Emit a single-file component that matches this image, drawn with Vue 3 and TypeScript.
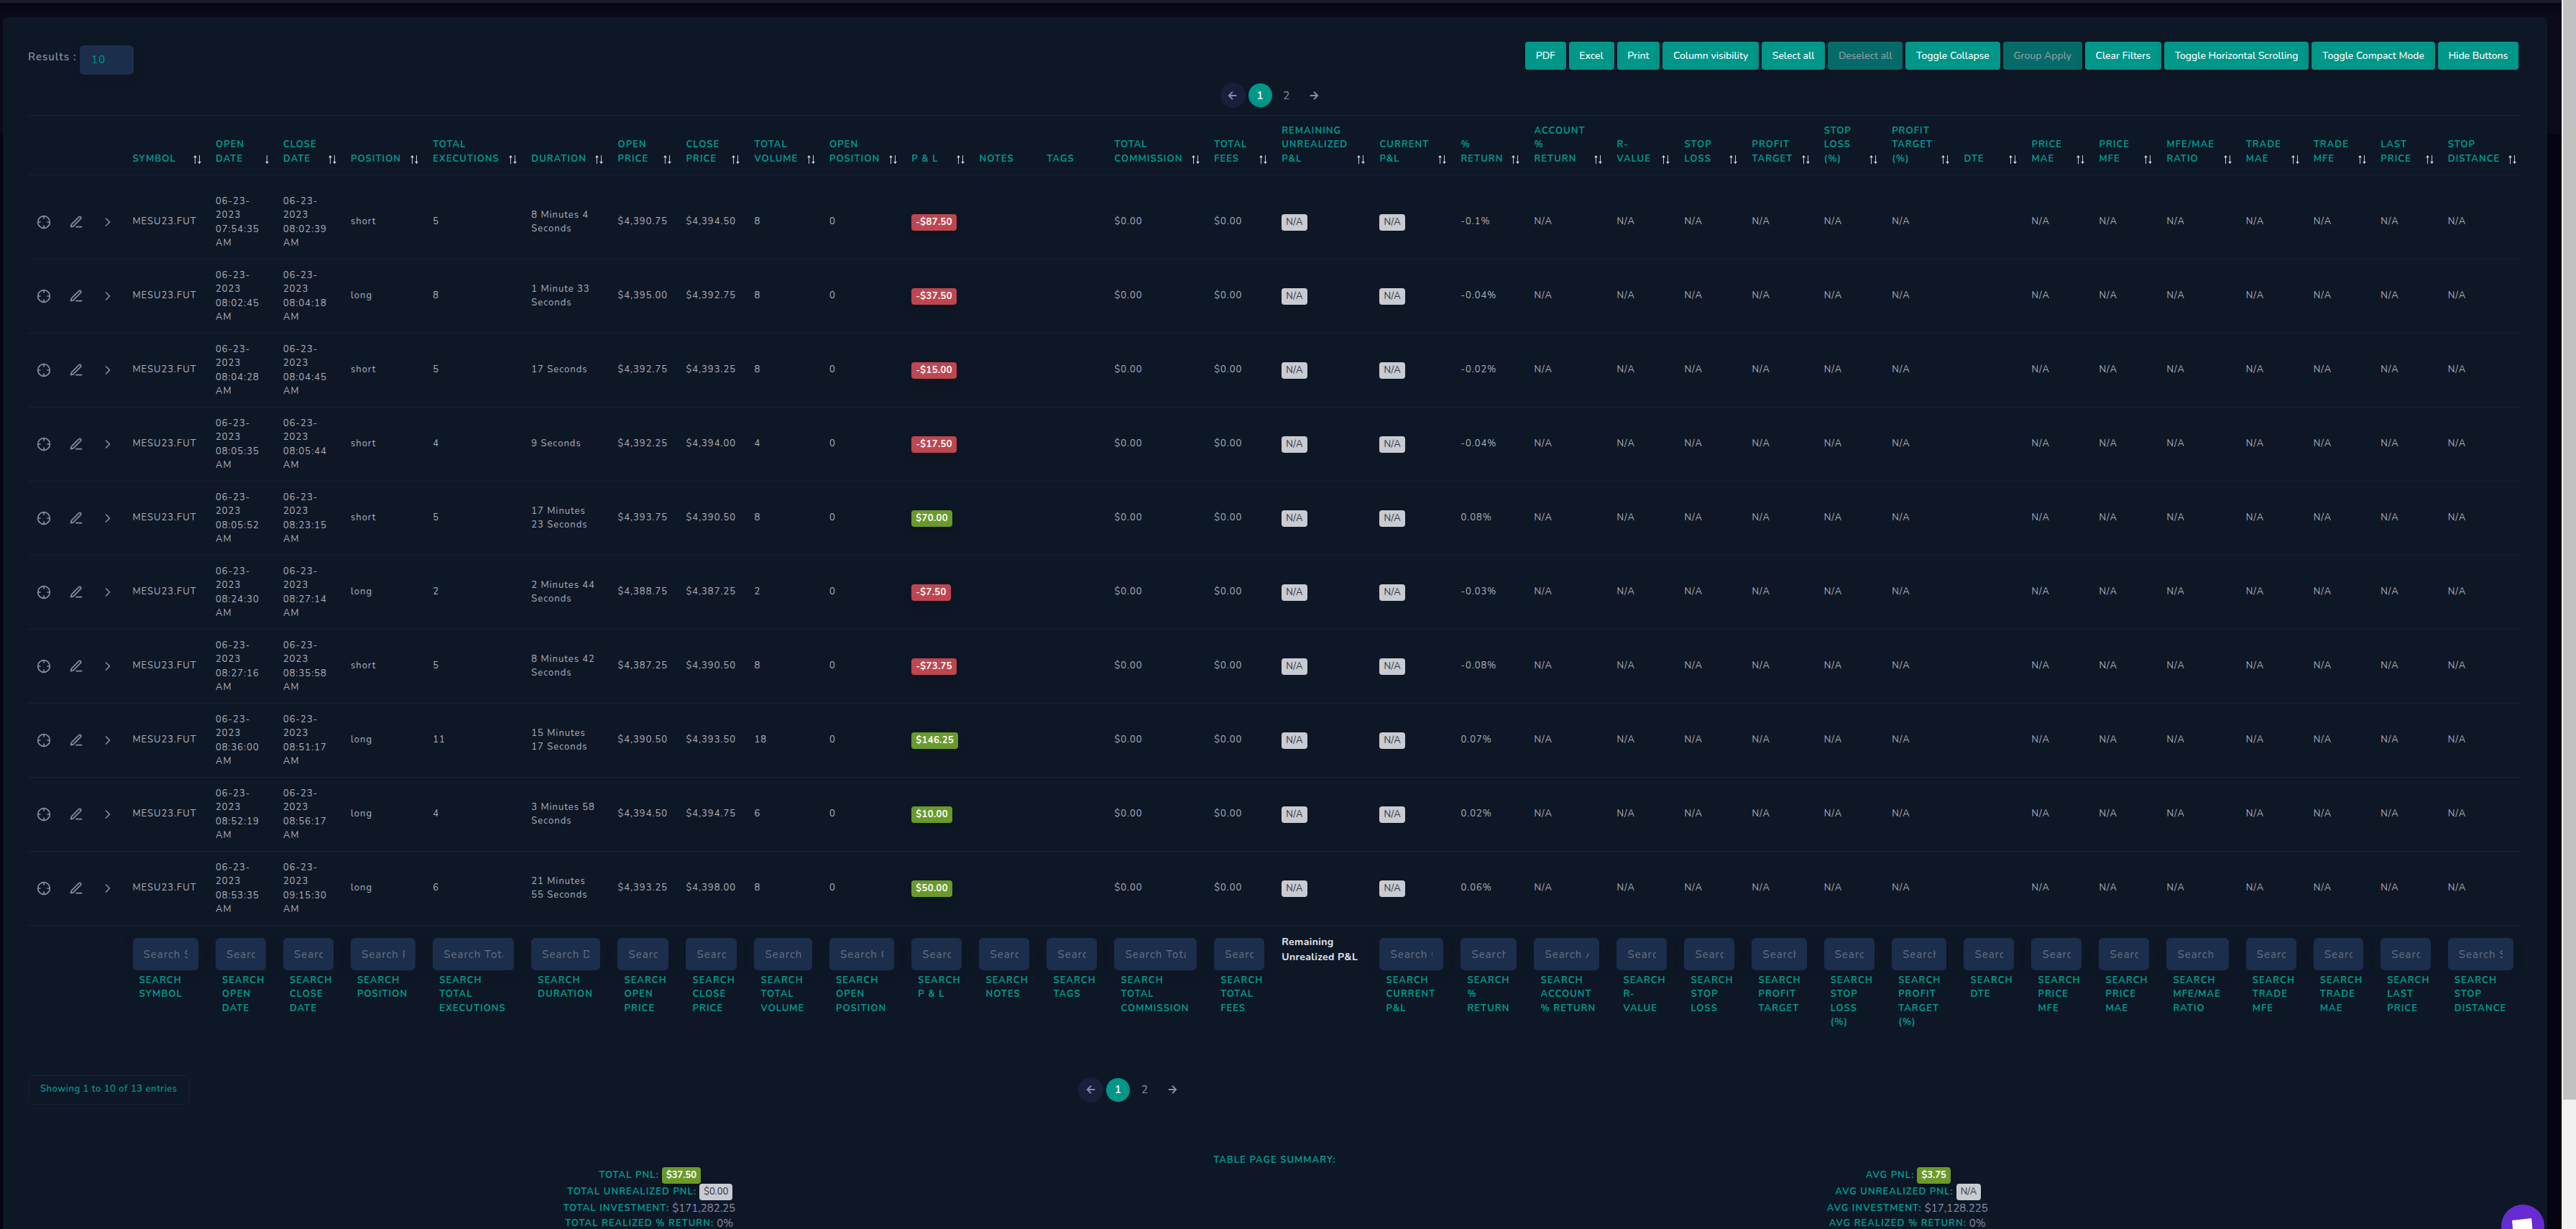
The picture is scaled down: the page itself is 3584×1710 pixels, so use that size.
<script setup lang="ts">
interface Column {
  key: string
  width: number
  head: string
  foot: string
  sort: 'none' | 'both' | 'down'
  placeholder?: string
}

interface Trade {
  open: string
  close: string
  side: string
  executions: number
  duration: string
  openPrice: string
  closePrice: string
  volume: number
  pnl: string
  ret: string
}

const columns: Column[] = [
  { key: 'symbol', width: 115.5, head: 'Symbol', foot: 'Search|Symbol', sort: 'both', placeholder: 'Search Symbol' },
  { key: 'openDate', width: 94, head: 'Open|Date', foot: 'Search|Open|Date', sort: 'down', placeholder: 'Search Open Date' },
  { key: 'closeDate', width: 94, head: 'Close|Date', foot: 'Search|Close|Date', sort: 'both', placeholder: 'Search Close Date' },
  { key: 'side', width: 114.3, head: 'Position', foot: 'Search|Position', sort: 'both', placeholder: 'Search Position' },
  { key: 'executions', width: 137, head: 'Total|Executions', foot: 'Search|Total|Executions', sort: 'both', placeholder: 'Search Total Executions' },
  { key: 'duration', width: 120.2, head: 'Duration', foot: 'Search|Duration', sort: 'both', placeholder: 'Search Duration' },
  { key: 'openPrice', width: 95, head: 'Open|Price', foot: 'Search|Open|Price', sort: 'both', placeholder: 'Search Open Price' },
  { key: 'closePrice', width: 95, head: 'Close|Price', foot: 'Search|Close|Price', sort: 'both', placeholder: 'Search Close Price' },
  { key: 'volume', width: 104.5, head: 'Total|Volume', foot: 'Search|Total|Volume', sort: 'both', placeholder: 'Search Total Volume' },
  { key: 'openPosition', width: 114.3, head: 'Open|Position', foot: 'Search|Open|Position', sort: 'both', placeholder: 'Search Open Position' },
  { key: 'pnl', width: 94.2, head: 'P & L', foot: 'Search|P & L', sort: 'both', placeholder: 'Search P & L' },
  { key: 'notes', width: 94, head: 'Notes', foot: 'Search|Notes', sort: 'none', placeholder: 'Search Notes' },
  { key: 'tags', width: 94, head: 'Tags', foot: 'Search|Tags', sort: 'none', placeholder: 'Search Tags' },
  { key: 'commission', width: 138.7, head: 'Total|Commission', foot: 'Search|Total|Commission', sort: 'both', placeholder: 'Search Total Commission' },
  { key: 'fees', width: 94, head: 'Total|Fees', foot: 'Search|Total|Fees', sort: 'both', placeholder: 'Search Total Fees' },
  { key: 'remaining', width: 136.3, head: 'Remaining|Unrealized|P&L', foot: 'Remaining|Unrealized P&L', sort: 'both' },
  { key: 'current', width: 113, head: 'Current|P&L', foot: 'Search|Current|P&L', sort: 'both', placeholder: 'Search Current P&L' },
  { key: 'ret', width: 102, head: '%|Return', foot: 'Search|%|Return', sort: 'both', placeholder: 'Search % Return' },
  { key: 'accountReturn', width: 115, head: 'Account|%|Return', foot: 'Search|Account|% Return', sort: 'both', placeholder: 'Search Account % Return' },
  { key: 'rValue', width: 94, head: 'R-|Value', foot: 'Search|R-|Value', sort: 'both', placeholder: 'Search R-Value' },
  { key: 'stopLoss', width: 94, head: 'Stop|Loss', foot: 'Search|Stop|Loss', sort: 'both', placeholder: 'Search Stop Loss' },
  { key: 'profitTarget', width: 100.2, head: 'Profit|Target', foot: 'Search|Profit|Target', sort: 'both', placeholder: 'Search Profit Target' },
  { key: 'stopLossPct', width: 94.5, head: 'Stop|Loss|(%)', foot: 'Search|Stop|Loss|(%)', sort: 'both', placeholder: 'Search Stop Loss (%)' },
  { key: 'profitTargetPct', width: 100.3, head: 'Profit|Target|(%)', foot: 'Search|Profit|Target|(%)', sort: 'both', placeholder: 'Search Profit Target (%)' },
  { key: 'dte', width: 94, head: 'DTE', foot: 'Search|DTE', sort: 'both', placeholder: 'Search DTE' },
  { key: 'priceMae', width: 94, head: 'Price|MAE', foot: 'Search|Price|MFE', sort: 'both', placeholder: 'Search Price MFE' },
  { key: 'priceMfe', width: 94, head: 'Price|MFE', foot: 'Search|Price|MAE', sort: 'both', placeholder: 'Search Price MAE' },
  { key: 'ratio', width: 110.3, head: 'MFE/MAE|Ratio', foot: 'Search|MFE/MAE|Ratio', sort: 'both', placeholder: 'Search MFE/MAE Ratio' },
  { key: 'tradeMae', width: 94, head: 'Trade|MAE', foot: 'Search|Trade|MFE', sort: 'both', placeholder: 'Search Trade MFE' },
  { key: 'tradeMfe', width: 93.5, head: 'Trade|MFE', foot: 'Search|Trade|MAE', sort: 'both', placeholder: 'Search Trade MAE' },
  { key: 'lastPrice', width: 93.5, head: 'Last|Price', foot: 'Search|Last|Price', sort: 'both', placeholder: 'Search Last Price' },
  { key: 'stopDistance', width: 115.2, head: 'Stop|Distance', foot: 'Search|Stop|Distance', sort: 'both', placeholder: 'Search Stop Distance' },
]

const trades: Trade[] = [
  { open: '07:54:35', close: '08:02:39', side: 'short', executions: 5, duration: '8 Minutes 4 Seconds', openPrice: '$4,390.75', closePrice: '$4,394.50', volume: 8, pnl: '-$87.50', ret: '-0.1%' },
  { open: '08:02:45', close: '08:04:18', side: 'long', executions: 8, duration: '1 Minute 33 Seconds', openPrice: '$4,395.00', closePrice: '$4,392.75', volume: 8, pnl: '-$37.50', ret: '-0.04%' },
  { open: '08:04:28', close: '08:04:45', side: 'short', executions: 5, duration: '17 Seconds', openPrice: '$4,392.75', closePrice: '$4,393.25', volume: 8, pnl: '-$15.00', ret: '-0.02%' },
  { open: '08:05:35', close: '08:05:44', side: 'short', executions: 4, duration: '9 Seconds', openPrice: '$4,392.25', closePrice: '$4,394.00', volume: 4, pnl: '-$17.50', ret: '-0.04%' },
  { open: '08:05:52', close: '08:23:15', side: 'short', executions: 5, duration: '17 Minutes 23 Seconds', openPrice: '$4,393.75', closePrice: '$4,390.50', volume: 8, pnl: '$70.00', ret: '0.08%' },
  { open: '08:24:30', close: '08:27:14', side: 'long', executions: 2, duration: '2 Minutes 44 Seconds', openPrice: '$4,388.75', closePrice: '$4,387.25', volume: 2, pnl: '-$7.50', ret: '-0.03%' },
  { open: '08:27:16', close: '08:35:58', side: 'short', executions: 5, duration: '8 Minutes 42 Seconds', openPrice: '$4,387.25', closePrice: '$4,390.50', volume: 8, pnl: '-$73.75', ret: '-0.08%' },
  { open: '08:36:00', close: '08:51:17', side: 'long', executions: 11, duration: '15 Minutes 17 Seconds', openPrice: '$4,390.50', closePrice: '$4,393.50', volume: 18, pnl: '$146.25', ret: '0.07%' },
  { open: '08:52:19', close: '08:56:17', side: 'long', executions: 4, duration: '3 Minutes 58 Seconds', openPrice: '$4,394.50', closePrice: '$4,394.75', volume: 6, pnl: '$10.00', ret: '0.02%' },
  { open: '08:53:35', close: '09:15:30', side: 'long', executions: 6, duration: '21 Minutes 55 Seconds', openPrice: '$4,393.25', closePrice: '$4,398.00', volume: 8, pnl: '$50.00', ret: '0.06%' },
]

const emptyKeys = ['notes', 'tags', 'dte']

function cell(t: Trade, key: string): string {
  if (emptyKeys.includes(key)) return ''
  switch (key) {
    case 'symbol': return 'MESU23.FUT'
    case 'openDate': return `06-23-\n2023\n${t.open}\nAM`
    case 'closeDate': return `06-23-\n2023\n${t.close}\nAM`
    case 'side': return t.side
    case 'executions': return String(t.executions)
    case 'duration': return t.duration
    case 'openPrice': return t.openPrice
    case 'closePrice': return t.closePrice
    case 'volume': return String(t.volume)
    case 'openPosition': return '0'
    case 'commission':
    case 'fees': return '$0.00'
    case 'ret': return t.ret
    default: return 'N/A'
  }
}

const lines = (s: string) => s.replace(/\|/g, '\n')

const buttons = [
  { label: 'PDF' }, { label: 'Excel' }, { label: 'Print' }, { label: 'Column visibility' },
  { label: 'Select all' }, { label: 'Deselect all', disabled: true }, { label: 'Toggle Collapse' },
  { label: 'Group Apply', disabled: true }, { label: 'Clear Filters' },
  { label: 'Toggle Horizontal Scrolling' }, { label: 'Toggle Compact Mode' }, { label: 'Hide Buttons' },
]

const summary = [
  {
    side: 'left',
    rows: [
      { label: 'Total PNL:', value: '$37.50', kind: 'badge win' },
      { label: 'Total Unrealized PNL:', value: '$0.00', kind: 'badge flat' },
      { label: 'Total Investment:', value: '$171,282.25', kind: 'plain' },
      { label: 'Total Realized % Return:', value: '0%', kind: 'plain' },
    ],
  },
  {
    side: 'right',
    rows: [
      { label: 'Avg PNL:', value: '$3.75', kind: 'badge win' },
      { label: 'Avg Unrealized PNL:', value: 'N/A', kind: 'badge flat' },
      { label: 'Avg Investment:', value: '$17,128.225', kind: 'plain' },
      { label: 'Avg Realized % Return:', value: '0%', kind: 'plain' },
    ],
  },
]
</script>

<template>
  <div class="page">
    <div class="topbar"></div>
    <main class="panel">
      <div class="controls">
        <div class="length">
          <span class="length-label">Results :</span>
          <div class="select">10</div>
        </div>
        <div class="buttons">
          <button v-for="b in buttons" :key="b.label" class="btn" :disabled="b.disabled">{{ b.label }}</button>
        </div>
      </div>

      <nav class="pager">
        <span class="pg prev">
          <svg viewBox="0 0 24 24" class="arrow"><path d="M19 12H5M12 19l-7-7 7-7" /></svg>
        </span>
        <span class="pg active">1</span>
        <span class="pg">2</span>
        <span class="pg next">
          <svg viewBox="0 0 24 24" class="arrow"><path d="M5 12h14M12 5l7 7-7 7" /></svg>
        </span>
      </nav>

      <table class="grid">
        <colgroup>
          <col style="width: 45px" /><col style="width: 44px" /><col style="width: 44.5px" />
          <col v-for="c in columns" :key="c.key" :style="{ width: c.width + 'px' }" />
        </colgroup>
        <thead>
          <tr>
            <th></th><th></th><th></th>
            <th v-for="c in columns" :key="c.key">
              <span class="lines">{{ lines(c.head) }}</span>
              <svg v-if="c.sort !== 'none'" class="sort" viewBox="0 0 14 14">
                <path v-if="c.sort === 'both'" d="M4.5 2v11" /><path v-if="c.sort === 'both'" class="tip" d="M2 4.6 4.5 1 7 4.6 4.5 3.8z" />
                <path d="M10.5 1v11" /><path class="tip" d="M8 9.4 10.5 13 13 9.4 10.5 10.2z" />
              </svg>
            </th>
          </tr>
        </thead>
        <tbody>
          <tr class="spacer"><td :colspan="columns.length + 3"></td></tr>
          <tr v-for="t in trades" :key="t.open">
            <td>
              <svg class="icon" viewBox="0 0 24 24"><circle cx="12" cy="12" r="10" /><path d="M22 12h-4M6 12H2M12 6V2M12 22v-4" /></svg>
            </td>
            <td>
              <svg class="icon" viewBox="0 0 24 24"><path d="M12 20h9" /><path d="M16.5 3.5a2.121 2.121 0 0 1 3 3L7 19l-4 1 1-4L16.5 3.5z" /></svg>
            </td>
            <td>
              <svg class="icon" viewBox="0 0 24 24"><path d="M9 18l6-6-6-6" /></svg>
            </td>
            <td v-for="c in columns" :key="c.key">
              <span v-if="c.key === 'pnl'" class="badge" :class="t.pnl.startsWith('-') ? 'loss' : 'win'">{{ t.pnl }}</span>
              <span v-else-if="c.key === 'remaining' || c.key === 'current'" class="badge flat">N/A</span>
              <span v-else class="text" :class="{ date: c.key.endsWith('Date') }">{{ cell(t, c.key) }}</span>
            </td>
          </tr>
        </tbody>
        <tfoot>
          <tr>
            <th></th><th></th><th></th>
            <th v-for="c in columns" :key="c.key">
              <template v-if="c.placeholder">
                <input class="search" type="text" :placeholder="c.placeholder" />
                <span class="lines foot-label">{{ lines(c.foot) }}</span>
              </template>
              <span v-else class="lines foot-plain">{{ lines(c.foot) }}</span>
            </th>
          </tr>
        </tfoot>
      </table>

      <div class="bottom">
        <div class="info">Showing 1 to 10 of 13 entries</div>
        <nav class="pager lower">
          <span class="pg prev">
            <svg viewBox="0 0 24 24" class="arrow"><path d="M19 12H5M12 19l-7-7 7-7" /></svg>
          </span>
          <span class="pg active">1</span>
          <span class="pg">2</span>
          <span class="pg next">
            <svg viewBox="0 0 24 24" class="arrow"><path d="M5 12h14M12 5l7 7-7 7" /></svg>
          </span>
        </nav>
      </div>

      <section class="summary">
        <h6 class="summary-title">Table Page Summary:</h6>
        <div class="summary-cols">
          <div v-for="s in summary" :key="s.side" class="summary-col">
            <div v-for="r in s.rows" :key="r.label" class="summary-row">
              <span class="sum-label">{{ r.label }}</span>
              <span :class="r.kind">{{ r.value }}</span>
            </div>
          </div>
        </div>
      </section>
    </main>

    <div class="scrollbar"><div class="thumb"></div></div>

    <div class="chat">
      <svg viewBox="0 0 60 60"><path d="M15 22 42 19 44.5 45H17z" fill="#fff" /></svg>
    </div>
  </div>
</template>

<style>
body {
  margin: 0;
  overflow: hidden;
  background: #040412;
}
</style>

<style scoped>
.page {
  position: relative;
  box-sizing: border-box;
  width: 3584px;
  height: 1710px;
  overflow: hidden;
  background: linear-gradient(#0a0a1b 187px, #040412 187px);
  font-family: Nunito, 'Open Sans', sans-serif;
  font-size: 13px;
  letter-spacing: 1px;
  color: #888ea8;
}

.topbar {
  width: 3564px;
  height: 4px;
  background: #1a1c2d;
  box-shadow: 0 2px 10px #000;
}

.panel {
  box-sizing: border-box;
  width: 3540px;
  height: 1700px;
  margin: 20px 0 0 4px;
  padding: 34px 36px 0 35px;
  border-radius: 6px;
  background: #0e1726;
  position: relative;
}

.controls {
  display: flex;
  justify-content: space-between;
  align-items: flex-start;
  height: 57px;
}

.length {
  display: flex;
  align-items: flex-start;
  gap: 4px;
  padding-top: 5px;
}

.length-label {
  width: 68px;
  font-size: 15px;
  font-weight: 600;
  line-height: 33px;
  white-space: nowrap;
}

.select {
  box-sizing: border-box;
  width: 75px;
  height: 41px;
  padding-left: 16px;
  border-radius: 6px;
  background: #1b2e4b;
  box-shadow: 0 4px 12px rgba(16, 24, 36, 0.6);
  color: #009688;
  font-size: 15px;
  line-height: 40px;
}

.buttons {
  display: flex;
  gap: 4px;
  margin-right: 4px;
}

.btn {
  height: 39px;
  padding: 0 14.8px;
  border: 0;
  border-radius: 4px;
  background: #009688;
  color: #fff;
  font-family: inherit;
  font-size: 14px;
  font-weight: 500;
  letter-spacing: -0.03px;
  box-shadow: 0 6px 14px rgba(0, 0, 0, 0.12);
}

.btn:disabled {
  background: #066a68;
  color: #8f9fa4;
  box-shadow: none;
}

.pager {
  display: flex;
  align-items: center;
  justify-content: center;
  gap: 4px;
  height: 35px;
  font-size: 15px;
  font-weight: 400;
  letter-spacing: 0;
}

.pager:not(.lower) {
  width: 147px;
  margin: 0 auto 10px;
  transform: translateX(-2px);
}

.pg {
  display: flex;
  align-items: center;
  justify-content: center;
  width: 33px;
  height: 33px;
  border-radius: 50%;
}

.prev {
  width: 35px;
  height: 35px;
  background: #191e3a;
}

.next {
  width: 35px;
}

.active {
  background: #009688;
  color: #fff;
  font-weight: 600;
}

.arrow {
  width: 18px;
  height: 18px;
  fill: none;
  stroke: #888ea8;
  stroke-width: 2.4;
}

.grid {
  width: 3469px;
  table-layout: fixed;
  border-collapse: separate;
  border-spacing: 0;
}

th,
td {
  box-sizing: border-box;
  padding: 0 12px;
  text-align: left;
  line-height: 19.5px;
}

thead th {
  position: relative;
  height: 84px;
  padding-bottom: 12px;
  vertical-align: bottom;
  border-top: 1px solid #191e3a;
  border-bottom: 1px solid #191e3a;
  color: #009688;
  font-weight: 700;
  text-transform: uppercase;
}

.lines {
  display: block;
  white-space: pre;
}

.sort {
  position: absolute;
  right: 7px;
  bottom: 14px;
  width: 14px;
  height: 14px;
  fill: none;
  stroke: #c9ccd2;
  stroke-width: 1;
}

.tip {
  fill: #e4e6ea;
  stroke: none;
}

tbody td {
  height: 103px;
  vertical-align: middle;
  border-bottom: 1px solid #191e3a;
}

tbody .spacer td {
  height: 14px;
  padding: 0;
  border: 0;
}

.text {
  display: block;
  white-space: pre-line;
  color: #acb0bc;
}

.date {
  padding-top: 1px;
}

.icon {
  display: block;
  width: 20px;
  height: 20px;
  fill: none;
  stroke: #888ea8;
  stroke-width: 2;
  stroke-linecap: round;
  stroke-linejoin: round;
}

.badge {
  display: inline-block;
  box-sizing: border-box;
  height: 23px;
  padding: 0 6px;
  border-radius: 4px;
  font-size: 13px;
  font-weight: 700;
  line-height: 23px;
  letter-spacing: 0.4px;
  color: #fff;
  vertical-align: middle;
  box-shadow: 0 6px 14px rgba(0, 0, 0, 0.15);
}

.loss {
  background: #be4650;
}

.win {
  background: #6a9a2b;
}

.flat {
  background: #c8cbd1;
  color: #2c2f3c;
  font-weight: 400;
  box-shadow: none;
}

tfoot th {
  height: 154px;
  padding-top: 12px;
  vertical-align: top;
  font-weight: 700;
}

.search {
  display: block;
  box-sizing: border-box;
  width: 100%;
  height: 45px;
  margin: 5px 0 4.5px;
  padding: 0 15px;
  border: 0;
  border-radius: 6px;
  background: #1b2e4b;
  color: #009688;
  font-family: inherit;
  font-size: 15px;
  letter-spacing: 1px;
  box-shadow: 0 4px 12px rgba(16, 24, 36, 0.6);
}

.search::placeholder {
  color: #667080;
  opacity: 1;
}

.foot-label {
  padding-left: 9px;
  color: #009688;
  text-transform: uppercase;
}

.foot-plain {
  color: #e6e8ee;
  font-size: 14px;
  font-weight: 700;
  line-height: 21px;
  letter-spacing: 0.4px;
}

.bottom {
  display: flex;
  align-items: center;
  height: 41px;
  margin-top: 53.5px;
}

.info {
  box-sizing: border-box;
  width: 225px;
  height: 41px;
  padding-left: 16px;
  border: 1px solid #191e3a;
  border-radius: 6px;
  color: #009688;
  font-weight: 600;
  letter-spacing: 0.5px;
  line-height: 37px;
  white-space: nowrap;
}

.lower {
  margin-left: 1236px;
}

.summary {
  margin-top: 67.5px;
  color: #009688;
  font-weight: 700;
}

.summary-title {
  margin: 0;
  font-size: 13px;
  font-weight: 700;
  line-height: 20px;
  text-align: center;
  text-transform: uppercase;
}

.summary-cols {
  display: flex;
  gap: 16px;
  width: 3485px;
  margin-left: -2px;
}

.summary-col {
  flex: 1;
  display: flex;
  flex-direction: column;
}

.summary-row {
  display: flex;
  align-items: center;
  justify-content: center;
  gap: 4px;
  height: 22.8px;
}

.summary-row:last-child {
  height: 19.6px;
}

.summary-row .badge {
  letter-spacing: 0;
}

.sum-label {
  text-transform: uppercase;
}

.plain {
  margin-right: 2px;
  color: #888ea8;
  font-size: 15px;
  font-weight: 400;
  line-height: 16px;
  letter-spacing: 0;
}

.scrollbar {
  position: absolute;
  top: 0;
  right: 0;
  width: 20px;
  height: 1710px;
  background: #f1f1f1;
}

.thumb {
  width: 18px;
  height: 1530px;
  margin-left: 2px;
  background: #c1c1c1;
}

.chat {
  position: absolute;
  left: 3480px;
  top: 1676px;
  width: 60px;
  height: 60px;
  border-radius: 50%;
  background: #672bd4;
}
</style>
